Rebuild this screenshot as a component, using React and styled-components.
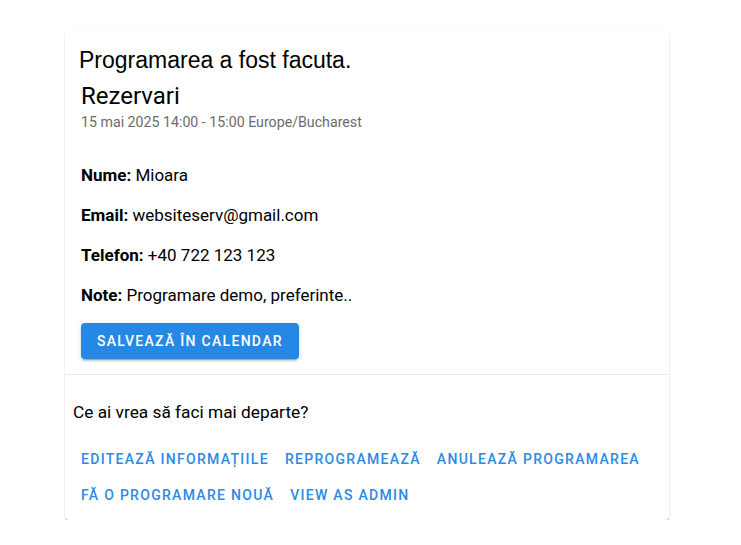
import React from 'react';
import styled, { createGlobalStyle } from 'styled-components';

const GlobalStyle = createGlobalStyle`
  body {
    margin: 0;
    background: #fff;
    font-family: Roboto, 'Liberation Sans', sans-serif;
  }
`;

const Page = styled.div`
  padding: 31px 0 0 65px;
`;

const Card = styled.div`
  width: 604px;
  background: #fff;
  border-radius: 4px;
  box-shadow: 0 2px 1px -1px rgba(0,0,0,0.2), 0 1px 1px 0 rgba(0,0,0,0.14), 0 1px 3px 0 rgba(0,0,0,0.12);
`;

const Top = styled.div`
  padding: 14px 16px 15px 14px;
  border-bottom: 1px solid #eaeaea;
`;

const Heading = styled.h2`
  margin: 0;
  font-family: 'Liberation Sans', Arial, sans-serif;
  font-weight: 400;
  font-size: 23px;
  line-height: 30px;
  color: #000;
`;

const Event = styled.div`
  padding-left: 2px;
  margin-top: 6px;
`;

const EventName = styled.div`
  font-size: 24px;
  line-height: 30px;
  color: #000;
`;

const EventDate = styled.div`
  font-size: 14.2px;
  line-height: 20px;
  color: #6b6b6b;
  margin-top: 1px;
`;

const Details = styled.div`
  margin-top: 31px;
  padding-left: 2px;
`;

const Field = styled.p`
  margin: 0 0 16px;
  font-size: 17px;
  line-height: 24px;
  color: #000;

  b {
    font-weight: 700;
  }
`;

const SaveButton = styled.button`
  display: inline-flex;
  align-items: center;
  height: 36px;
  padding: 0 16px;
  border: none;
  border-radius: 4px;
  background: #2688e5;
  color: #fff;
  font-family: Roboto, sans-serif;
  font-weight: 500;
  font-size: 14px;
  letter-spacing: 1.3px;
  text-transform: uppercase;
  box-shadow: 0 3px 1px -2px rgba(0,0,0,0.2), 0 2px 2px 0 rgba(0,0,0,0.14), 0 1px 5px 0 rgba(0,0,0,0.12);
  cursor: pointer;
`;

const Bottom = styled.div`
  padding: 25px 8px 7px 8px;
`;

const Question = styled.div`
  font-size: 17.3px;
  line-height: 24px;
  color: #000;
`;

const Actions = styled.div`
  display: flex;
  flex-wrap: wrap;
  margin-top: 17px;
`;

const LinkButton = styled.button`
  height: 36px;
  padding: 0 8px;
  border: none;
  background: none;
  color: #2c8ae6;
  font-family: Roboto, sans-serif;
  font-weight: 500;
  font-size: 14px;
  letter-spacing: 1.3px;
  text-transform: uppercase;
  cursor: pointer;
`;

const actions = [
  'Editează informațiile',
  'Reprogramează',
  'Anulează programarea',
  'Fă o programare nouă',
  'View as admin',
];

export default function App() {
  return (
    <Page>
      <GlobalStyle />
      <Card>
        <Top>
          <Heading>Programarea a fost facuta.</Heading>
          <Event>
            <EventName>Rezervari</EventName>
            <EventDate>15 mai 2025 14:00 - 15:00 Europe/Bucharest</EventDate>
          </Event>
          <Details>
            <Field><b>Nume:</b> Mioara</Field>
            <Field><b>Email:</b> websiteserv@gmail.com</Field>
            <Field><b>Telefon:</b> +40 722 123 123</Field>
            <Field><b>Note:</b> Programare demo, preferinte..</Field>
            <SaveButton>Salvează în calendar</SaveButton>
          </Details>
        </Top>
        <Bottom>
          <Question>Ce ai vrea să faci mai departe?</Question>
          <Actions>
            {actions.map((a) => (
              <LinkButton key={a}>{a}</LinkButton>
            ))}
          </Actions>
        </Bottom>
      </Card>
    </Page>
  );
}
